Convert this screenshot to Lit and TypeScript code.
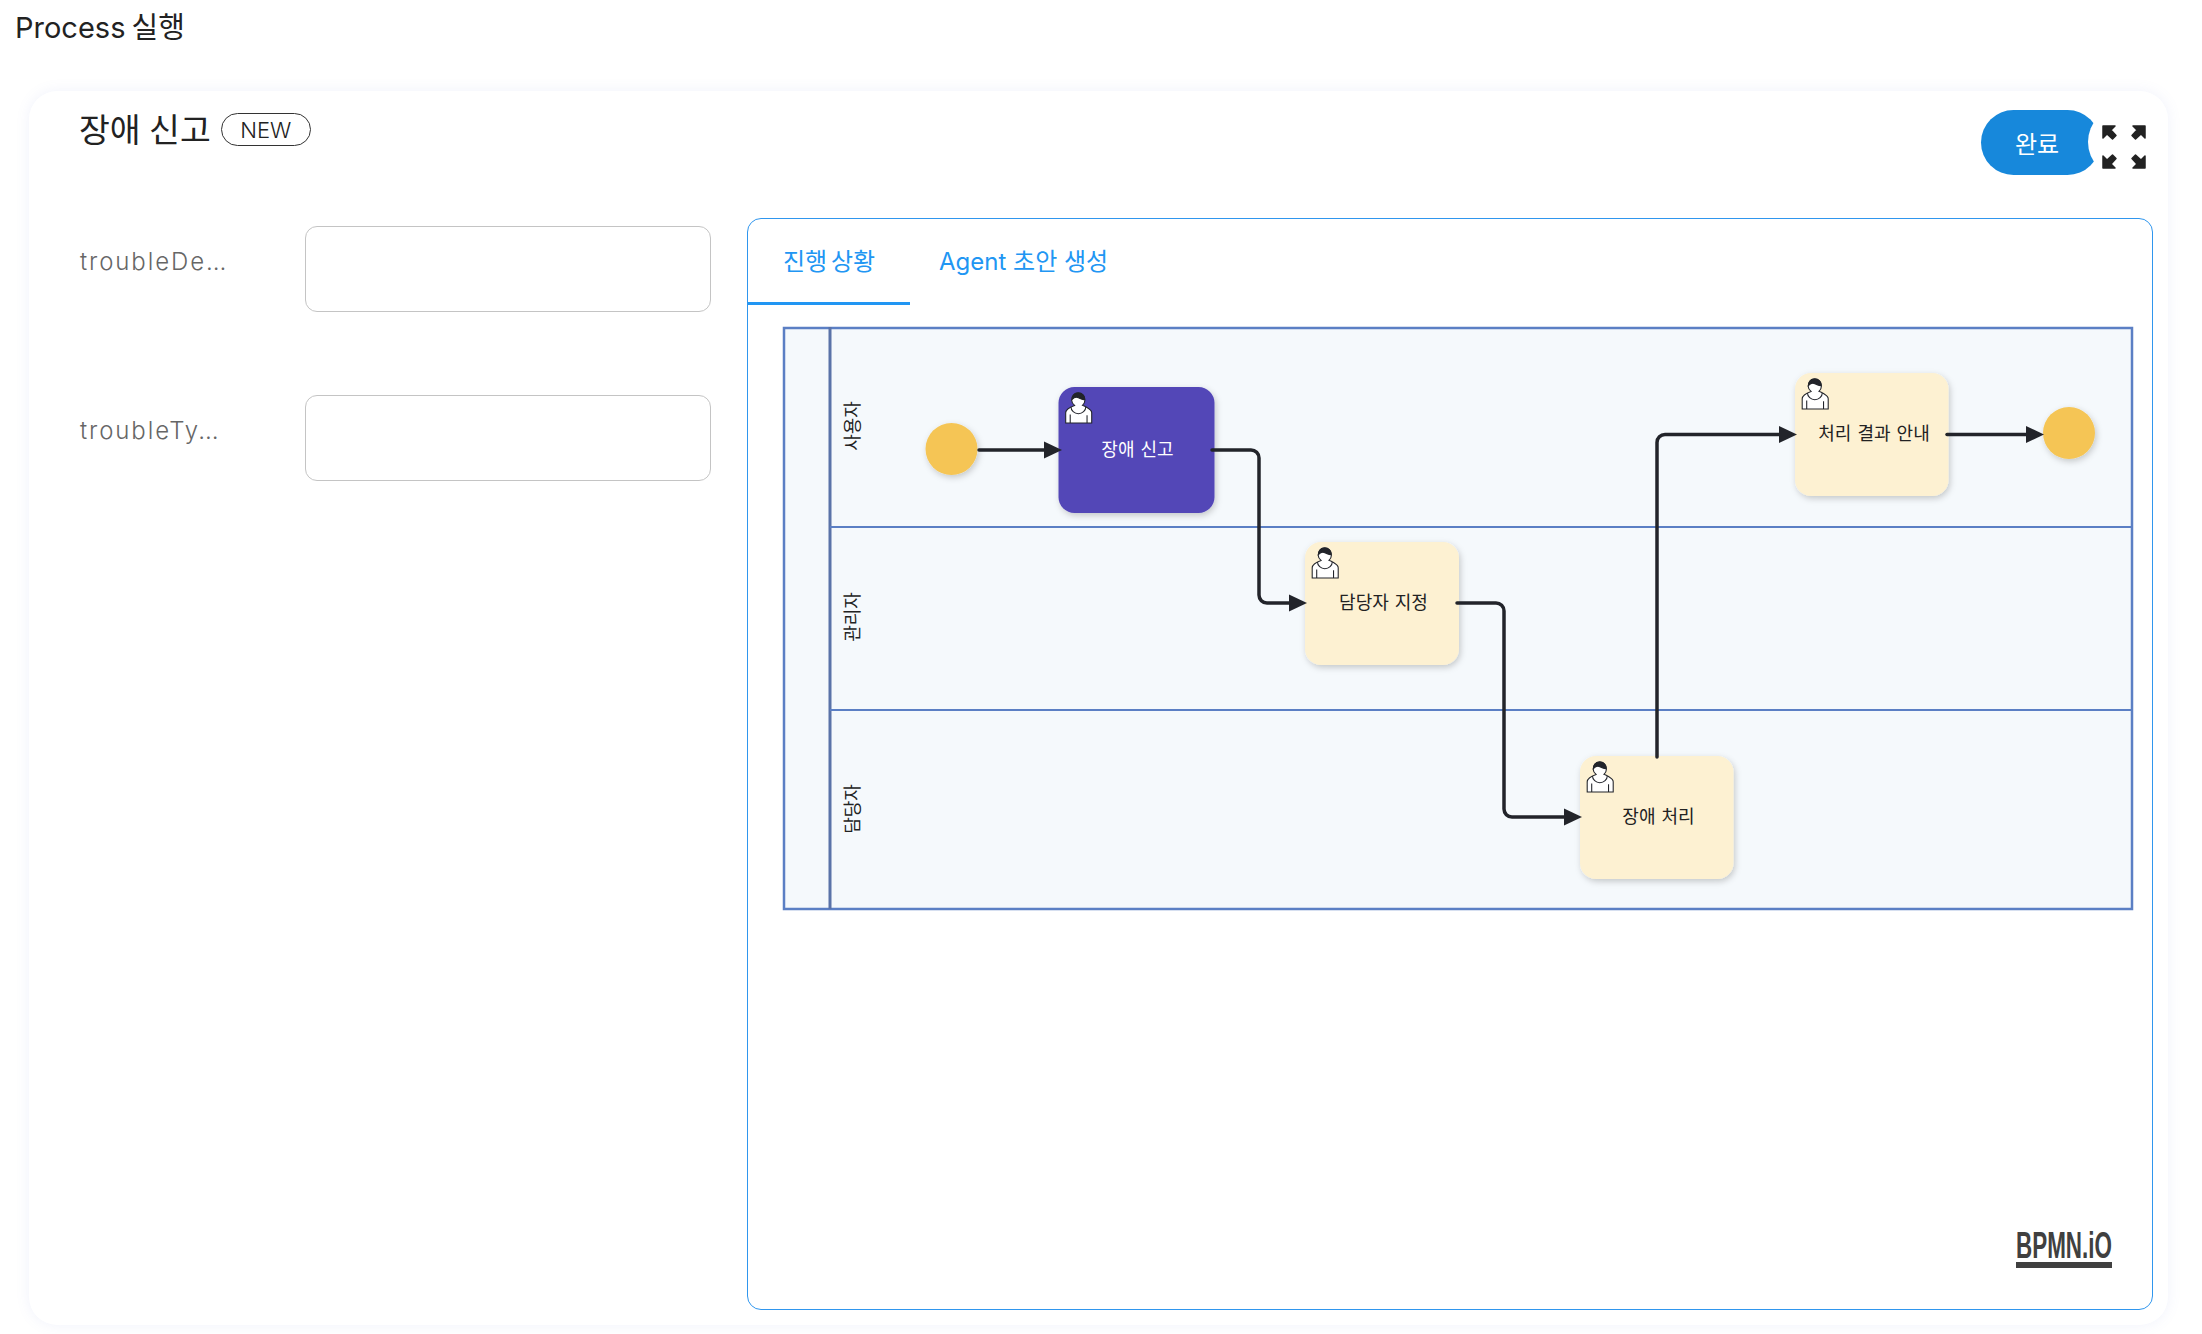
import { LitElement, html, css, svg } from "lit";
import { customElement } from "lit/decorators.js";

const KR = `Inter, "Noto Sans CJK KR", "Noto Sans", sans-serif`;

interface Task { x: number; y: number; w: number; h: number; label: string; tx: number; ty: number; active?: boolean; }

const TASKS: Task[] = [
  { x: 1058.5, y: 387, w: 156, h: 126, label: "장애 신고", tx: 1137.5, ty: 448, active: true },
  { x: 1305, y: 542, w: 154, h: 123, label: "담당자 지정", tx: 1383.5, ty: 601 },
  { x: 1580, y: 756, w: 153.5, h: 123, label: "장애 처리", tx: 1658.5, ty: 815 },
  { x: 1795, y: 373, w: 153.5, h: 123, label: "처리 결과 안내", tx: 1874, ty: 432 },
];

const FLOWS = [
  "M979 450 H1046",
  "M1212 450 H1251 a8 8 0 0 1 8 8 V595 a8 8 0 0 0 8 8 H1291",
  "M1457 603 H1496 a8 8 0 0 1 8 8 V809 a8 8 0 0 0 8 8 H1566",
  "M1657 757 V442.5 a8 8 0 0 1 8 -8 H1781",
  "M1947 434.5 H2029",
];

const HEADS: [number, number][] = [[1062, 450], [1307, 603], [1582, 817], [1797, 434.5], [2044, 434.5]];

const LANES: [string, number][] = [["사용자", 426], ["관리자", 617], ["담당자", 809]];

const userIcon = (t: Task) => svg`
  <g transform="translate(${t.x + 1} ${t.y}) scale(1.53)" stroke-width="0.7" stroke="#22242a">
    <path fill="#fff" d="m15,12 c 0.909,-0.845 1.594,-2.049 1.594,-3.385 0,-2.554 -1.805,-4.622 -4.357,-4.622 -2.552,0 -4.288,2.068 -4.288,4.622 0,1.348 0.974,2.562 1.896,3.405 -0.529,0.187 -5.669,2.097 -5.794,4.756 v 6.718 h 17 v -6.718 c 0,-2.298 -5.528,-4.595 -6.051,-4.776 z m -8,6 l 0,5.5 m 11,0 l 0,-5"/>
    <path fill="none" d="m15,12 m 2.162,1.009 c 0,2.447 -2.158,4.431 -4.821,4.431 -2.665,0 -4.822,-1.981 -4.822,-4.431"/>
    <path fill="#22242a" d="m15,12 m -6.9,-3.8 c 0,0 2.251,-2.358 4.274,-1.177 2.024,1.181 4.221,1.537 4.124,0.965 -0.098,-0.57 -0.117,-3.791 -4.191,-4.136 -3.575,0.001 -4.208,3.367 -4.207,4.348 z"/>
  </g>`;

const CORNER = "M1 1 H13 L9 5 L14 10.5 L10.5 14 L5 9 L1 13 Z";

@customElement("app-root")
export class AppRoot extends LitElement {
  static styles = css`
    :host { display: block; width: 2202px; height: 1334px; background: #fff; color: #222; font-family: ${css([KR] as unknown as TemplateStringsArray)}; overflow: hidden; }
    * { box-sizing: border-box; }
    .page-title { height: 91px; padding: 12px 0 0 15px; margin: 0; font-size: 29px; line-height: 32px; font-weight: 400; color: #222; word-spacing: -2px; }
    .card { display: flex; flex-direction: column; width: 2139px; height: 1234px; margin-left: 29px; padding: 19px 15px 15px 50px; background: #fff; border-radius: 28px; box-shadow: 0 0 14px rgba(110, 130, 220, 0.1); }
    .head { display: flex; justify-content: space-between; align-items: flex-start; height: 108px; flex: none; }
    .name { display: flex; align-items: center; gap: 10px; margin-top: 3px; }
    .name h2 { margin: 0; font-size: 33.5px; line-height: 32px; font-weight: 400; color: #222; word-spacing: -1px; }
    .badge { display: flex; align-items: center; justify-content: center; width: 90px; height: 33px; border: 1.5px solid #333; border-radius: 17px; font-size: 22px; font-weight: 300; color: #222; }
    .actions { display: flex; align-items: center; margin: -4px -7px 0 0; }
    .done { width: 119px; height: 65px; border: none; border-radius: 33px; background: #1788db; color: #fff; font-family: inherit; font-size: 24px; padding: 0 7px 0 0; margin-right: -12px; }
    .expand { position: relative; display: flex; align-items: center; justify-content: center; width: 72px; height: 72px; border-radius: 50%; background: #fff; padding: 9px 0 0 0; }
    .body { display: flex; gap: 36px; flex: 1; min-height: 0; margin-left: 1px; }
    .form { width: 631px; flex: none; display: flex; flex-direction: column; gap: 83px; padding-top: 8px; }
    .row { display: flex; height: 86px; }
    .label { width: 225px; flex: none; padding-top: 20px; font-size: 24px; line-height: 32px; color: #666; letter-spacing: 1.9px; font-weight: 300; }
    .row input { width: 406px; height: 86px; border: 1.5px solid #c4c4c4; border-radius: 12px; background: #fff; outline: none; }
    .panel { flex: 1; min-width: 0; display: flex; flex-direction: column; border: 1px solid #2f96ee; border-radius: 14px; overflow: hidden; }
    .tabs { display: flex; height: 86px; flex: none; }
    .tab { display: flex; align-items: center; font-size: 24px; line-height: 32px; color: #2196f3; height: 86px; }
    .tab.on { width: 162px; padding: 3px 0 0 35px; border-bottom: 3px solid #2196f3; word-spacing: -3px; }
    .tab.off { padding: 0 0 0 29px; }
    .diagram { display: block; width: 1404px; height: 1004px; font-family: "Noto Sans CJK KR", sans-serif; }
    .pool { fill: #f5f9fc; stroke: #5b7fc4; stroke-width: 2.5; }
    .divider { stroke: #5a73a8; stroke-width: 3; }
    .lane { stroke: #5b7fc4; stroke-width: 2; }
    .flow { fill: none; stroke: #22242a; stroke-width: 3.5; stroke-linecap: round; }
    .arrow { fill: #22242a; }
    .event { fill: #f5c555; filter: url(#sh); }
    .task { fill: #fdf1d2; filter: url(#sh); }
    .task.active { fill: #5346b7; }
    .t-label { font-size: 18px; word-spacing: 2px; fill: #222; text-anchor: middle; dominant-baseline: central; }
    .t-label.active { fill: #fff; }
    .lane-label { font-size: 18px; fill: #222; text-anchor: middle; dominant-baseline: central; }
    .logo { font-family: "Liberation Sans", sans-serif; font-weight: 700; font-size: 37px; fill: #404040; }
    .logo-bar { fill: #404040; }
  `;

  render() {
    return html`
      <h1 class="page-title">Process 실행</h1>
      <section class="card">
        <div class="head">
          <div class="name"><h2>장애 신고</h2><span class="badge">NEW</span></div>
          <div class="actions">
            <button class="done">완료</button>
            <div class="expand">
              <svg width="44" height="44" viewBox="0 0 44 44" fill="#222" stroke="#222" stroke-width="1.5" stroke-linejoin="round">
                <path d=${CORNER} />
                <path d=${CORNER} transform="translate(44 0) scale(-1 1)" />
                <path d=${CORNER} transform="translate(0 44) scale(1 -1)" />
                <path d=${CORNER} transform="translate(44 44) scale(-1 -1)" />
              </svg>
            </div>
          </div>
        </div>
        <div class="body">
          <div class="form">
            <div class="row"><div class="label">troubleDe…</div><input type="text" /></div>
            <div class="row"><div class="label">troubleTy…</div><input type="text" /></div>
          </div>
          <div class="panel">
            <div class="tabs">
              <div class="tab on">진행 상황</div>
              <div class="tab off">Agent 초안 생성</div>
            </div>
            <svg class="diagram" viewBox="748 305 1404 1004">
              <defs>
                <filter id="sh" x="-20%" y="-20%" width="145%" height="145%">
                  <feDropShadow dx="1.5" dy="2.5" stdDeviation="3" flood-color="#000" flood-opacity="0.2" />
                </filter>
              </defs>
              <rect class="pool" x="784" y="328" width="1348" height="581" />
              <line class="divider" x1="830" y1="327" x2="830" y2="909" />
              <line class="lane" x1="830" y1="527" x2="2132" y2="527" />
              <line class="lane" x1="830" y1="710" x2="2132" y2="710" />
              ${LANES.map(([l, y]) => svg`<text class="lane-label" transform="translate(851 ${y}) rotate(-90)">${l}</text>`)}
              <circle class="event" cx="951.5" cy="449" r="26" />
              <circle class="event" cx="2069" cy="433" r="26" />
              ${TASKS.map((t) => svg`
                <rect class="task ${t.active ? "active" : ""}" x=${t.x} y=${t.y} width=${t.w} height=${t.h} rx="16" />
                ${userIcon(t)}
                <text class="t-label ${t.active ? "active" : ""}" x=${t.tx} y=${t.ty}>${t.label}</text>`)}
              ${FLOWS.map((d) => svg`<path class="flow" d=${d} />`)}
              ${HEADS.map(([x, y]) => svg`<path class="arrow" d="M${x} ${y} l-18 -8.5 v17 z" />`)}
              <text class="logo" transform="translate(2016 1258) scale(0.606 1)">BPMN.iO</text>
              <rect class="logo-bar" x="2016" y="1262" width="96" height="6" />
            </svg>
          </div>
        </div>
      </section>
    `;
  }
}
